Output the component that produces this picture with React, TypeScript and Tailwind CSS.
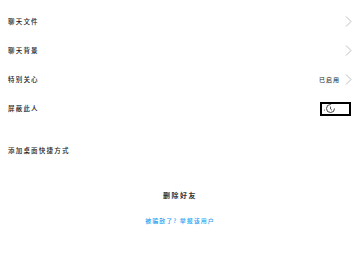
import React from "react";

const font = { fontFamily: '"Noto Sans CJK SC", "Noto Sans", sans-serif' };

function Chevron() {
  return (
    <svg width="7" height="11" viewBox="0 0 7 11" className="shrink-0">
      <path d="M1 0.5 L6 5.5 L1 10.5" fill="none" stroke="#b5b5b5" strokeWidth="0.9" />
    </svg>
  );
}

function Row({ label, right }: { label: string; right?: React.ReactNode }) {
  return (
    <div className="flex h-[29px] items-center justify-between pl-[8px] pr-[8px]">
      <span className="text-[6.5px] font-medium tracking-[1.2px] text-[#222]">{label}</span>
      <div className="flex items-center gap-[5px]">{right}</div>
    </div>
  );
}

export default function App() {
  return (
    <div className="h-[276px] w-[360px] overflow-hidden bg-white" style={font}>
      <div className="pt-[7px]">
        <Row label="聊天文件" right={<Chevron />} />
        <Row label="聊天背景" right={<Chevron />} />
        <Row
          label="特别关心"
          right={
            <>
              <span className="text-[6px] font-medium tracking-[1px] text-[#333]">已启用</span>
              <Chevron />
            </>
          }
        />
        <Row
          label="屏蔽此人"
          right={
            <div className="mr-[1px] flex h-[14px] w-[31px] items-center border-2 border-black bg-white pl-[1px]">
              <svg width="13" height="11" viewBox="0 0 13 11">
                <circle cx="7.5" cy="5.5" r="4" fill="none" stroke="#333" strokeWidth="0.9" strokeDasharray="19 6" />
                <path d="M7.5 3.5 L7.5 6 L9 7.3" fill="none" stroke="#333" strokeWidth="0.8" />
                <circle cx="1.5" cy="7" r="0.6" fill="#555" />
              </svg>
            </div>
          }
        />
      </div>
      <div className="mt-[13px] flex h-[29px] items-center pl-[8px]">
        <span className="text-[6.5px] font-medium tracking-[1.2px] text-[#222]">添加桌面快捷方式</span>
      </div>
      <div className="mt-[25px] flex justify-center">
        <span className="text-[7px] font-bold tracking-[1.5px] text-[#333]">删除好友</span>
      </div>
      <div className="mt-[15px] flex justify-center">
        <span className="text-[6px] font-medium tracking-[1px] text-[#1da1f2]">被骗敌了? 举报该用户</span>
      </div>
    </div>
  );
}
